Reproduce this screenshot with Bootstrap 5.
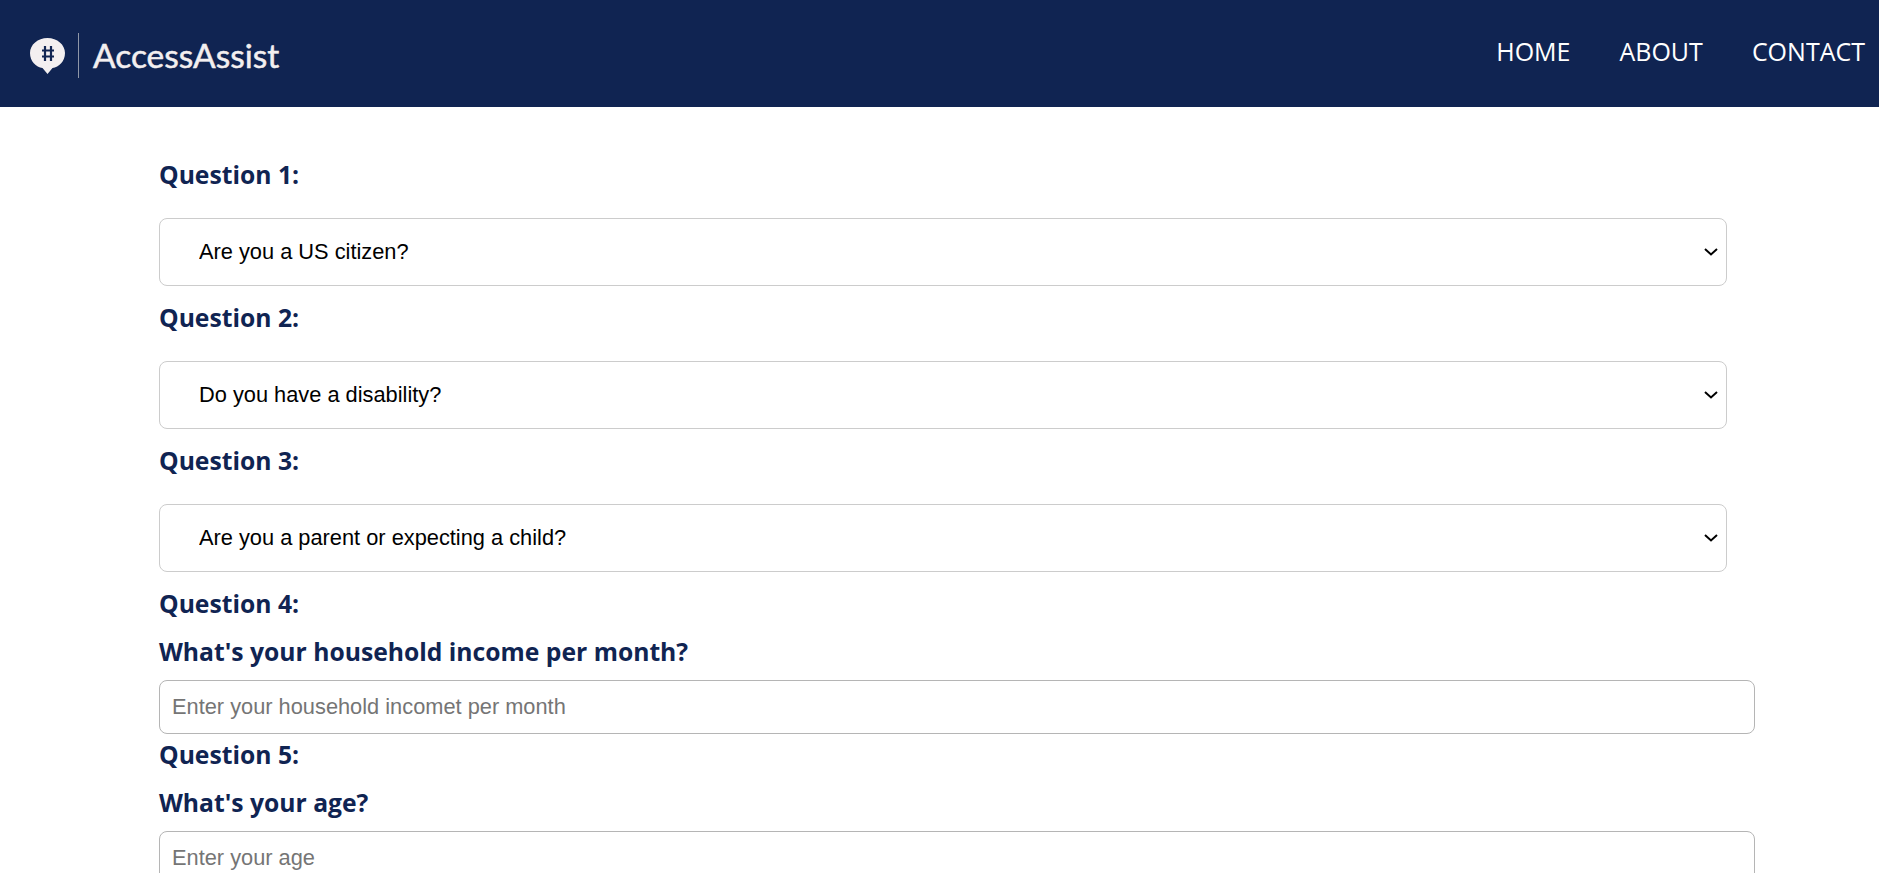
<!DOCTYPE html>
<html lang="en">
<head>
  <meta charset="UTF-8">
  <meta name="viewport" content="width=device-width, initial-scale=1.0">
  <title>AccessAssist</title>
  <link href="https://cdn.jsdelivr.net/npm/bootstrap@5.3.0/dist/css/bootstrap.min.css" rel="stylesheet">
  <style>
    body {
      font-family: "Liberation Sans", Arial, sans-serif;
    }
    .top-bar {
      background-color: #102452;
      height: 107px;
      padding: 0 14px 0 30px;
    }
    .brand-link {
      padding-top: 4px;
    }
    .brand-rule {
      width: 1px;
      height: 45px;
      background-color: #8f97a8;
      margin: 0 14px 0 13px;
    }
    .brand-name {
      font-family: Lato, sans-serif;
      font-size: 33.5px;
      line-height: 1;
      color: #f3eff0;
      -webkit-text-stroke: 0.5px #f3eff0;
    }
    .top-link {
      font-family: "Open Sans", "Noto Sans", sans-serif;
      font-size: 25px;
      color: #fff;
      text-decoration: none;
      margin-bottom: 3px;
    }
    .nav-links {
      gap: 49px;
    }
    .quiz-form {
      padding: 53px 124px 0 159px;
    }
    .quiz-head {
      font-family: "Open Sans", "Noto Sans", sans-serif;
      font-weight: 700;
      font-size: 24.7px;
      line-height: 29px;
      color: #102452;
      margin-bottom: 19px;
    }
    .quiz-head.first-head {
      margin-bottom: 29px;
    }
    .quiz-head.input-head {
      margin-bottom: 14px;
    }
    .quiz-select.form-select {
      width: 1568px;
      height: 68px;
      padding-left: 39px;
      font-size: 21.8px;
      color: #000;
      border-color: #ccc;
      border-radius: 8px;
      margin-bottom: 17px;
      background-image: url("data:image/svg+xml,%3csvg xmlns='http://www.w3.org/2000/svg' viewBox='0 0 14 8'%3e%3cpath fill='none' stroke='%23000' stroke-width='2' d='M1 1l6 5.500 6-5.500'/%3e%3c/svg%3e");
      background-position: right 8px center;
      background-size: 14px 8px;
    }
    .quiz-input.form-control {
      height: 54px;
      padding: 0 12px;
      font-size: 21.8px;
      border-color: #b5b5b5;
      border-radius: 8px;
      margin-bottom: 6px;
    }
    .quiz-input::placeholder {
      color: #757575;
      opacity: 1;
    }
  </style>
</head>
<body>
  <!-- Header -->
  <nav class="top-bar d-flex align-items-center justify-content-between">
    <a class="brand-link d-flex align-items-center text-decoration-none" href="#">
      <svg width="35" height="36" viewBox="0 0 35 36" aria-hidden="true">
        <path d="M17.500 0C7.800 0 0 6.700 0 15C0 23.300 6 29 12.500 30L17.500 36L22.500 30C29 29 35 23.300 35 15C35 6.700 27.200 0 17.500 0Z" fill="#f3eff0"/>
        <path d="M15 8V23M21 8V23M12 12.500H24M12 18.500H24" stroke="#102452" stroke-width="2.200" fill="none"/>
      </svg>
      <span class="brand-rule"></span>
      <span class="brand-name">AccessAssist</span>
    </a>
    <div class="nav-links d-flex align-items-center">
      <a class="top-link" href="#">HOME</a>
      <a class="top-link" href="#">ABOUT</a>
      <a class="top-link" href="#">CONTACT</a>
    </div>
  </nav>

  <!-- Questions -->
  <form class="quiz-form">
    <div class="quiz-head first-head">Question 1:</div>
    <select class="quiz-select form-select"><option>Are you a US citizen?</option></select>

    <div class="quiz-head first-head">Question 2:</div>
    <select class="quiz-select form-select"><option>Do you have a disability?</option></select>

    <div class="quiz-head first-head">Question 3:</div>
    <select class="quiz-select form-select"><option>Are you a parent or expecting a child?</option></select>

    <div class="quiz-head">Question 4:</div>
    <div class="quiz-head input-head">What's your household income per month?</div>
    <input class="quiz-input form-control" type="text" placeholder="Enter your household incomet per month">

    <div class="quiz-head">Question 5:</div>
    <div class="quiz-head input-head">What's your age?</div>
    <input class="quiz-input form-control" type="text" placeholder="Enter your age">
  </form>

  <script src="https://cdn.jsdelivr.net/npm/bootstrap@5.3.0/dist/js/bootstrap.bundle.min.js"></script>
</body>
</html>
